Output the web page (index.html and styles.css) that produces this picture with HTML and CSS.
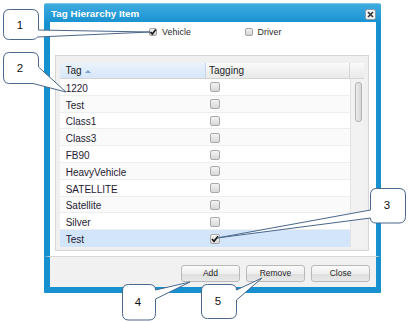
FILE: index.html
```html
<!DOCTYPE html>
<html>
<head>
<meta charset="utf-8">
<link rel="stylesheet" href="styles.css">
</head>
<body>
<div class="dialog">
  <div class="titlebar">
    <span class="title">Tag Hierarchy Item</span>
    <span class="close"><svg width="11" height="11" viewBox="0 0 11 11"><rect x="0.5" y="0.5" width="10" height="10" rx="2" fill="#f4f6f8" stroke="#8a9aa8"/><path d="M3 3 L8 8 M8 3 L3 8" stroke="#333" stroke-width="1.6"/></svg></span>
  </div>
  <div class="body">
    <div class="checks">
      <label class="chk"><span class="sbox"><svg width="8" height="8" viewBox="0 0 8 8"><path d="M1.5 4 L3.3 6 L6.8 1.5" fill="none" stroke="#111" stroke-width="1.5"/></svg></span>Vehicle</label>
      <label class="chk"><span class="sbox"></span>Driver</label>
    </div>
    <div class="frame">
      <div class="grid">
        <div class="ghead">
          <div class="hc col-tag sorted">Tag<span class="arrow"></span></div>
          <div class="hc col-tagging">Tagging</div>
          <div class="hc col-sb"></div>
        </div>
        <div class="gbody">
          <div class="rows">
            <div class="row"><div class="c1">1220</div><div class="c2"><span class="cb"></span></div></div>
            <div class="row alt"><div class="c1">Test</div><div class="c2"><span class="cb"></span></div></div>
            <div class="row"><div class="c1">Class1</div><div class="c2"><span class="cb"></span></div></div>
            <div class="row alt"><div class="c1">Class3</div><div class="c2"><span class="cb"></span></div></div>
            <div class="row"><div class="c1">FB90</div><div class="c2"><span class="cb"></span></div></div>
            <div class="row alt"><div class="c1">HeavyVehicle</div><div class="c2"><span class="cb"></span></div></div>
            <div class="row"><div class="c1">SATELLITE</div><div class="c2"><span class="cb"></span></div></div>
            <div class="row alt"><div class="c1">Satellite</div><div class="c2"><span class="cb"></span></div></div>
            <div class="row"><div class="c1">Silver</div><div class="c2"><span class="cb"></span></div></div>
            <div class="row selected"><div class="c1">Test</div><div class="c2"><span class="cb"><svg width="10" height="10" viewBox="0 0 10 10"><path d="M2 5 L4 7.2 L8 2.2" fill="none" stroke="#111" stroke-width="1.6"/></svg></span></div></div>
          </div>
          <div class="vscroll"><div class="thumb"></div></div>
        </div>
      </div>
    </div>
    <div class="gap"></div>
  </div>
  <div class="footer">
    <button class="btn">Add</button>
    <button class="btn">Remove</button>
    <button class="btn">Close</button>
  </div>
  <div class="bottom"></div>
</div>

<svg class="callouts" width="408" height="322" viewBox="0 0 408 322">
  <g fill="#ffffff" stroke="#4a678c" stroke-width="1">
    <path d="M9.5 9.5 H32 Q38.5 9.5 38.5 16 V30 L150 32 L37.5 37 Q36 39.5 32 39.5 H9.5 Q3.5 39.5 3.5 33.5 V16 Q3.5 9.5 9.5 9.5 Z"/>
    <path d="M9.5 52.5 H32 Q38.5 52.5 38.5 59 V67 L66 92 L33 83.5 H9.5 Q3.5 83.5 3.5 77 V59 Q3.5 52.5 9.5 52.5 Z"/>
    <path d="M376.5 188.5 H399 Q405.5 188.5 405.5 195 V216.5 Q405.5 223 399 223 H376 Q370.5 223 370.5 218 L217 238 L370.5 210 V195 Q370.5 188.5 376.5 188.5 Z"/>
    <path d="M128.5 284.5 H149 Q155.5 284.5 155.5 290 L190 282 L155.5 299 V313.5 Q155.5 320 149 320 H128.5 Q122.5 320 122.5 313.5 V291 Q122.5 284.5 128.5 284.5 Z"/>
    <path d="M207.5 284.5 H230 Q236.5 284.5 236.5 290 L262 278 L236.5 300 V312 Q236.5 318.5 230 318.5 H207.5 Q201.5 318.5 201.5 312 V291 Q201.5 284.5 207.5 284.5 Z"/>
  </g>
  <g class="nums" font-family="Liberation Sans, Arial, sans-serif" font-size="11.5" fill="#111" text-anchor="middle">
    <text x="20" y="29">1</text>
    <text x="20" y="72">2</text>
    <text x="387" y="209">3</text>
    <text x="138" y="306">4</text>
    <text x="218" y="305">5</text>
  </g>
</svg>
</body>
</html>
```

FILE: styles.css
```css
html, body {
  margin: 0;
  padding: 0;
  background: #ffffff;
}
body {
  width: 408px;
  height: 322px;
  overflow: hidden;
  font-family: "Liberation Sans", Arial, sans-serif;
  position: relative;
}
.dialog {
  margin: 3px 0 0 44px;
  width: 337px;
}
.titlebar {
  height: 19px;
  box-sizing: border-box;
  background: linear-gradient(#3eabdf, #1a93d2);
  border-top: 1px solid #7cc4e8;
  display: flex;
  align-items: center;
  justify-content: space-between;
  padding: 0 5px 0 7px;
  border-radius: 2px 2px 0 0;
}
.title {
  color: #ffffff;
  font-weight: bold;
  font-size: 9.8px;
  letter-spacing: 0.05px;
  margin-top: 1px;
}
.close {
  display: block;
  width: 11px;
  height: 11px;
  margin-top: 3px;
}
.close svg { display: block; }
.body {
  border-left: 6px solid #1790cf;
  border-right: 5px solid #1790cf;
  background: #ffffff;
}
.checks {
  height: 33px;
  box-sizing: border-box;
  padding: 6px 0 0 99px;
  display: flex;
  align-items: flex-start;
}
.chk {
  width: 95.5px;
  display: flex;
  align-items: center;
  font-size: 8.8px;
  color: #2a2a2a;
  letter-spacing: 0.1px;
  line-height: 8px;
}
.sbox {
  width: 8px;
  height: 8px;
  box-sizing: border-box;
  border: 1px solid #a2a2a2;
  border-radius: 2px;
  background: linear-gradient(#f2f2f2, #d6d6d6);
  margin-right: 5px;
  position: relative;
}
.sbox svg {
  display: block;
  margin: -1px 0 0 -1px;
}
.frame {
  margin: 0 7px 0 5px;
  height: 196px;
  box-sizing: border-box;
  border: 1px solid #d6d6d6;
  background: #f0f0f0;
  padding: 7px 4px 3px 4px;
}
.grid {
  height: 184px;
  background: #ffffff;
}
.ghead {
  display: flex;
  height: 16px;
  box-sizing: border-box;
  border-bottom: 1px solid #d4d4d4;
}
.hc {
  height: 15px;
  box-sizing: border-box;
  font-size: 10px;
  color: #1e1e1e;
  display: flex;
  align-items: center;
  background: linear-gradient(#fafafa, #e9e9ea);
  border-right: 1px solid #d6d6d6;
}
.col-tag {
  width: 146px;
  padding-left: 5.5px;
}
.col-tag.sorted {
  background: linear-gradient(#ebf3fc, #d6e6f8);
  border-right-color: #c5d6ec;
}
.col-tagging {
  width: 144px;
  padding-left: 3px;
}
.col-sb {
  width: 14px;
  border-right: none;
}
.arrow {
  display: inline-block;
  width: 0;
  height: 0;
  border-left: 3px solid transparent;
  border-right: 3px solid transparent;
  border-bottom: 3px solid #7d9fca;
  margin-left: 3.5px;
  margin-top: 1px;
}
.gbody {
  display: flex;
  height: 168px;
}
.rows {
  width: 290px;
}
.row {
  height: 16.8px;
  box-sizing: border-box;
  border-bottom: 1px solid #eeeeee;
  display: flex;
  align-items: center;
  background: #ffffff;
  font-size: 10px;
  color: #1f1a33;
}
.row.alt { background: #fafafa; }
.row.selected {
  background: #d2e5fa;
  border-bottom-color: #d2e5fa;
}
.c1 {
  width: 146px;
  padding-left: 5.7px;
  box-sizing: border-box;
  padding-top: 3px;
}
.c2 {
  width: 144px;
  padding-left: 4px;
  box-sizing: border-box;
  display: flex;
  align-items: center;
  padding-top: 1px;
}
.cb {
  width: 10px;
  height: 10px;
  box-sizing: border-box;
  border: 1px solid #a9a9a9;
  border-radius: 2px;
  background: linear-gradient(#f3f3f3, #d8d8d8);
  position: relative;
}
.cb svg {
  display: block;
  margin: -1px 0 0 -1px;
}
.vscroll {
  width: 14px;
  box-sizing: border-box;
  background: #f2f2f2;
  border-left: 1px solid #e2e2e2;
  padding: 3px 0 0 4px;
}
.thumb {
  width: 7px;
  height: 40px;
  box-sizing: border-box;
  border: 1px solid #b4b4b4;
  border-radius: 3px;
  background: linear-gradient(90deg, #ececec, #d6d6d6);
}
.gap {
  height: 5px;
}
.footer {
  border-left: 6px solid #1790cf;
  border-right: 5px solid #1790cf;
  border-top: 1px solid #d8d8d8;
  background: #f1f1f1;
  height: 31px;
  box-sizing: border-box;
  padding: 8px 6px 0 0;
  display: flex;
  justify-content: flex-end;
  gap: 6px;
}
.btn {
  width: 59px;
  height: 17px;
  box-sizing: border-box;
  margin: 0;
  padding: 0;
  border: 1px solid #b9b9b9;
  border-radius: 3px;
  background: linear-gradient(#fbfbfb, #efefef 50%, #dedede 52%, #e8e8e8);
  font-family: "Liberation Sans", Arial, sans-serif;
  font-size: 8.5px;
  color: #1e1e1e;
  line-height: 15px;
}
.bottom {
  height: 6px;
  background: #1790cf;
  border-radius: 0 0 1px 1px;
}
.callouts {
  position: absolute;
  left: 0;
  top: 0;
  pointer-events: none;
}
```
